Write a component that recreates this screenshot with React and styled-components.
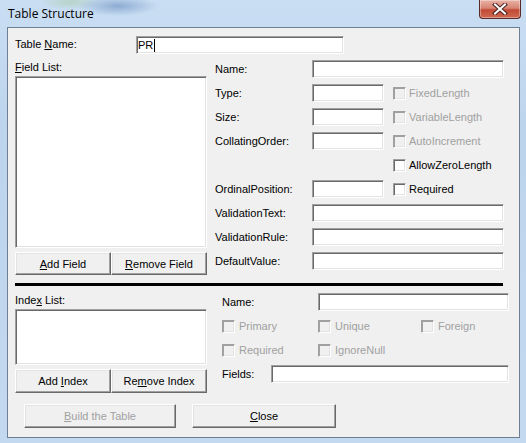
import React from "react";
import styled, { createGlobalStyle } from "styled-components";

const GlobalStyle = createGlobalStyle`
  html, body {
    margin: 0;
    padding: 0;
    background: #c5daf0;
  }
  * {
    box-sizing: border-box;
  }
`;

const fieldRows = [
  { label: "Name:", wide: true },
  { label: "Type:", check: "FixedLength", disabled: true },
  { label: "Size:", check: "VariableLength", disabled: true },
  { label: "CollatingOrder:", check: "AutoIncrement", disabled: true },
  { label: "", check: "AllowZeroLength", only: true },
  { label: "OrdinalPosition:", check: "Required" },
  { label: "ValidationText:", wide: true },
  { label: "ValidationRule:", wide: true },
  { label: "DefaultValue:", wide: true },
];

const indexChecks = [
  ["Primary", "Unique", "Foreign"],
  ["Required", "IgnoreNull"],
];

export default function App() {
  return (
    <>
      <GlobalStyle />
      <Window>
        <TitleBar>
          <Title>Table Structure</Title>
          <CloseButton>
            <svg width="16" height="12" viewBox="0 0 16 12">
              <path
                d="M3 1.5 L13 10.5 M13 1.5 L3 10.5"
                stroke="#4a2420"
                strokeWidth="4"
                strokeLinecap="square"
              />
              <path
                d="M3 1.5 L13 10.5 M13 1.5 L3 10.5"
                stroke="#ffffff"
                strokeWidth="2"
                strokeLinecap="square"
              />
            </svg>
          </CloseButton>
        </TitleBar>

        <Client>
          <NameRow>
            <NameLabel>
              Table <u>N</u>ame:
            </NameLabel>
            <TextBox $w={208}>
              <span>PR</span>
              <Caret />
            </TextBox>
          </NameRow>

          <Section $gap={6}>
            <ListColumn>
              <ListLabel $h={16}>
                <u>F</u>ield List:
              </ListLabel>
              <ListBox $h={172} />
              <ButtonPair>
                <PushButton>
                  <span><u>A</u>dd Field</span>
                </PushButton>
                <PushButton>
                  <span><u>R</u>emove Field</span>
                </PushButton>
              </ButtonPair>
            </ListColumn>

            <FieldGrid>
              {fieldRows.map((row, i) => (
                <React.Fragment key={i}>
                  <Label>{row.label}</Label>
                  {row.wide && <TextBox $span />}
                  {!row.wide && !row.only && <TextBox $w={72} />}
                  {row.only && <span />}
                  {row.check && (
                    <CheckCell>
                      <CheckBox $disabled={row.disabled} />
                      <CheckText $disabled={row.disabled}>{row.check}</CheckText>
                    </CheckCell>
                  )}
                </React.Fragment>
              ))}
            </FieldGrid>
          </Section>

          <Separator />

          <Section $gap={7}>
            <ListColumn>
              <ListLabel $h={16}>
                Inde<u>x</u> List:
              </ListLabel>
              <ListBox $h={56} />
              <ButtonPair>
                <PushButton $h={24}>
                  <span>Add <u>I</u>ndex</span>
                </PushButton>
                <PushButton $h={24}>
                  <span>Re<u>m</u>ove Index</span>
                </PushButton>
              </ButtonPair>
            </ListColumn>

            <IndexGrid>
              <Label>Name:</Label>
              <TextBox $span />
              {indexChecks.map((row, r) => (
                <React.Fragment key={r}>
                  {row.map((name) => (
                    <IndexCheck key={name}>
                      <CheckBox $disabled />
                      <CheckText $disabled>{name}</CheckText>
                    </IndexCheck>
                  ))}
                  {row.length < 3 && <span />}
                </React.Fragment>
              ))}
              <FieldsRow>
                <FieldsLabel>Fields:</FieldsLabel>
                <TextBox $grow />
              </FieldsRow>
            </IndexGrid>
          </Section>

          <Footer>
            <PushButton $w={152} $h={24} $disabled>
              <span><u>B</u>uild the Table</span>
            </PushButton>
            <PushButton $w={144} $h={24}>
              <span><u>C</u>lose</span>
            </PushButton>
          </Footer>
        </Client>
      </Window>
    </>
  );
}

const Window = styled.div`
  width: 526px;
  height: 443px;
  display: flex;
  flex-direction: column;
  padding: 0 6px 5px 7px;
  background:
    radial-gradient(ellipse 40px 10px at 118px 6px, rgba(70, 110, 170, 0.45), transparent),
    radial-gradient(ellipse 30px 8px at 70px 2px, rgba(150, 190, 120, 0.35), transparent),
    linear-gradient(to bottom, #c9def3 0%, #bcd4ec 30%, #c3d9f0 100%);
  font-family: "Liberation Sans", Arial, sans-serif;
  font-size: 11px;
  color: #000;
`;

const TitleBar = styled.div`
  height: 27px;
  flex: none;
  display: flex;
  align-items: flex-start;
  justify-content: space-between;
`;

const Title = styled.span`
  margin: 7px 0 0 1px;
  font-family: "Open Sans", "Noto Sans", sans-serif;
  font-size: 12px;
  line-height: 14px;
  color: #000;
`;

const CloseButton = styled.div`
  width: 42px;
  height: 19px;
  margin-right: -1px;
  display: flex;
  align-items: center;
  justify-content: center;
  border: 1px solid #5a2a26;
  border-top: none;
  border-radius: 0 0 4px 4px;
  background: linear-gradient(
    to bottom,
    #e8b2a6 0%,
    #d88574 45%,
    #c24a36 55%,
    #cf6a50 100%
  );
  box-shadow: inset 0 0 0 1px rgba(255, 255, 255, 0.35);
`;

const Client = styled.div`
  flex: 1;
  display: flex;
  flex-direction: column;
  background: #f0f0f0;
  border: 1px solid #6f7f93;
  padding: 8px 8px 0 7px;
`;

const NameRow = styled.div`
  display: flex;
  align-items: center;
`;

const NameLabel = styled.span`
  width: 121px;
  padding-bottom: 2px;
`;

const Label = styled.span`
  display: flex;
  align-items: center;
  white-space: nowrap;
  padding-bottom: 1px;
`;

const TextBox = styled.div`
  width: ${({ $w }) => ($w ? `${$w}px` : "auto")};
  ${({ $span }) => $span && "grid-column: 2 / span 2;"}
  ${({ $grow }) => $grow && "flex: 1;"}
  height: 18px;
  display: flex;
  align-items: center;
  padding-left: 1px;
  background: #fff;
  border: 1px solid;
  border-color: #a0a0a0 #ffffff #ffffff #a0a0a0;
  box-shadow: inset 1px 1px 0 #696969, inset -1px -1px 0 #e3e3e3;
  line-height: 13px;
`;

const Caret = styled.span`
  width: 1px;
  height: 13px;
  background: #000;
  margin-left: 1px;
`;

const Section = styled.div`
  display: flex;
  margin-top: ${({ $gap }) => $gap}px;
`;

const ListColumn = styled.div`
  width: 192px;
  flex: none;
  display: flex;
  flex-direction: column;
`;

const ListLabel = styled.span`
  height: ${({ $h }) => $h}px;
  line-height: 12px;
  padding-top: 1px;
`;

const ListBox = styled.div`
  height: ${({ $h }) => $h}px;
  background: #fff;
  border: 1px solid;
  border-color: #a0a0a0 #ffffff #ffffff #a0a0a0;
  box-shadow: inset 1px 1px 0 #696969, inset -1px -1px 0 #e3e3e3;
`;

const ButtonPair = styled.div`
  margin-top: 4px;
  display: grid;
  grid-template-columns: 96px 96px;
`;

const PushButton = styled.div`
  width: ${({ $w }) => ($w ? `${$w}px` : "auto")};
  height: ${({ $h }) => $h || 23}px;
  display: flex;
  align-items: center;
  justify-content: center;
  background: #f0f0f0;
  border: 1px solid;
  border-color: #ffffff #696969 #696969 #ffffff;
  box-shadow: inset -1px -1px 0 #a0a0a0, inset 1px 1px 0 #e3e3e3;
  color: ${({ $disabled }) => ($disabled ? "#a0a0a0" : "#000")};
  white-space: nowrap;
`;

const FieldGrid = styled.div`
  margin-left: 8px;
  width: 289px;
  display: grid;
  grid-template-columns: 97px 72px 120px;
  grid-auto-rows: 18px;
  row-gap: 6px;
  align-content: start;
`;

const CheckCell = styled.div`
  display: flex;
  align-items: center;
  gap: 3px;
  padding-left: 9px;
`;

const CheckBox = styled.span`
  width: 13px;
  height: 13px;
  flex: none;
  background: ${({ $disabled }) => ($disabled ? "#f0f0f0" : "#fff")};
  border: 1px solid;
  border-color: #a0a0a0 #ffffff #ffffff #a0a0a0;
  box-shadow: ${({ $disabled }) =>
    $disabled
      ? "inset 1px 1px 0 #a0a0a0, inset -1px -1px 0 #e3e3e3"
      : "inset 1px 1px 0 #696969, inset -1px -1px 0 #e3e3e3"};
`;

const CheckText = styled.span`
  color: ${({ $disabled }) => ($disabled ? "#a0a0a0" : "#000")};
  white-space: nowrap;
  padding-bottom: 1px;
`;

const Separator = styled.div`
  height: 3px;
  margin: 8px 8px 0 0;
  background: #000;
`;

const IndexGrid = styled.div`
  margin-left: 15px;
  width: 287px;
  display: grid;
  grid-template-columns: 96px 103px 88px;
  grid-auto-rows: 18px;
  row-gap: 6px;
  align-content: start;
`;

const IndexCheck = styled.div`
  display: flex;
  align-items: center;
  gap: 4px;
`;

const FieldsRow = styled.div`
  grid-column: 1 / span 3;
  display: flex;
  align-items: center;
`;

const FieldsLabel = styled.span`
  width: 49px;
`;

const Footer = styled.div`
  margin: 11px 0 0 9px;
  display: flex;
  gap: 16px;
`;
